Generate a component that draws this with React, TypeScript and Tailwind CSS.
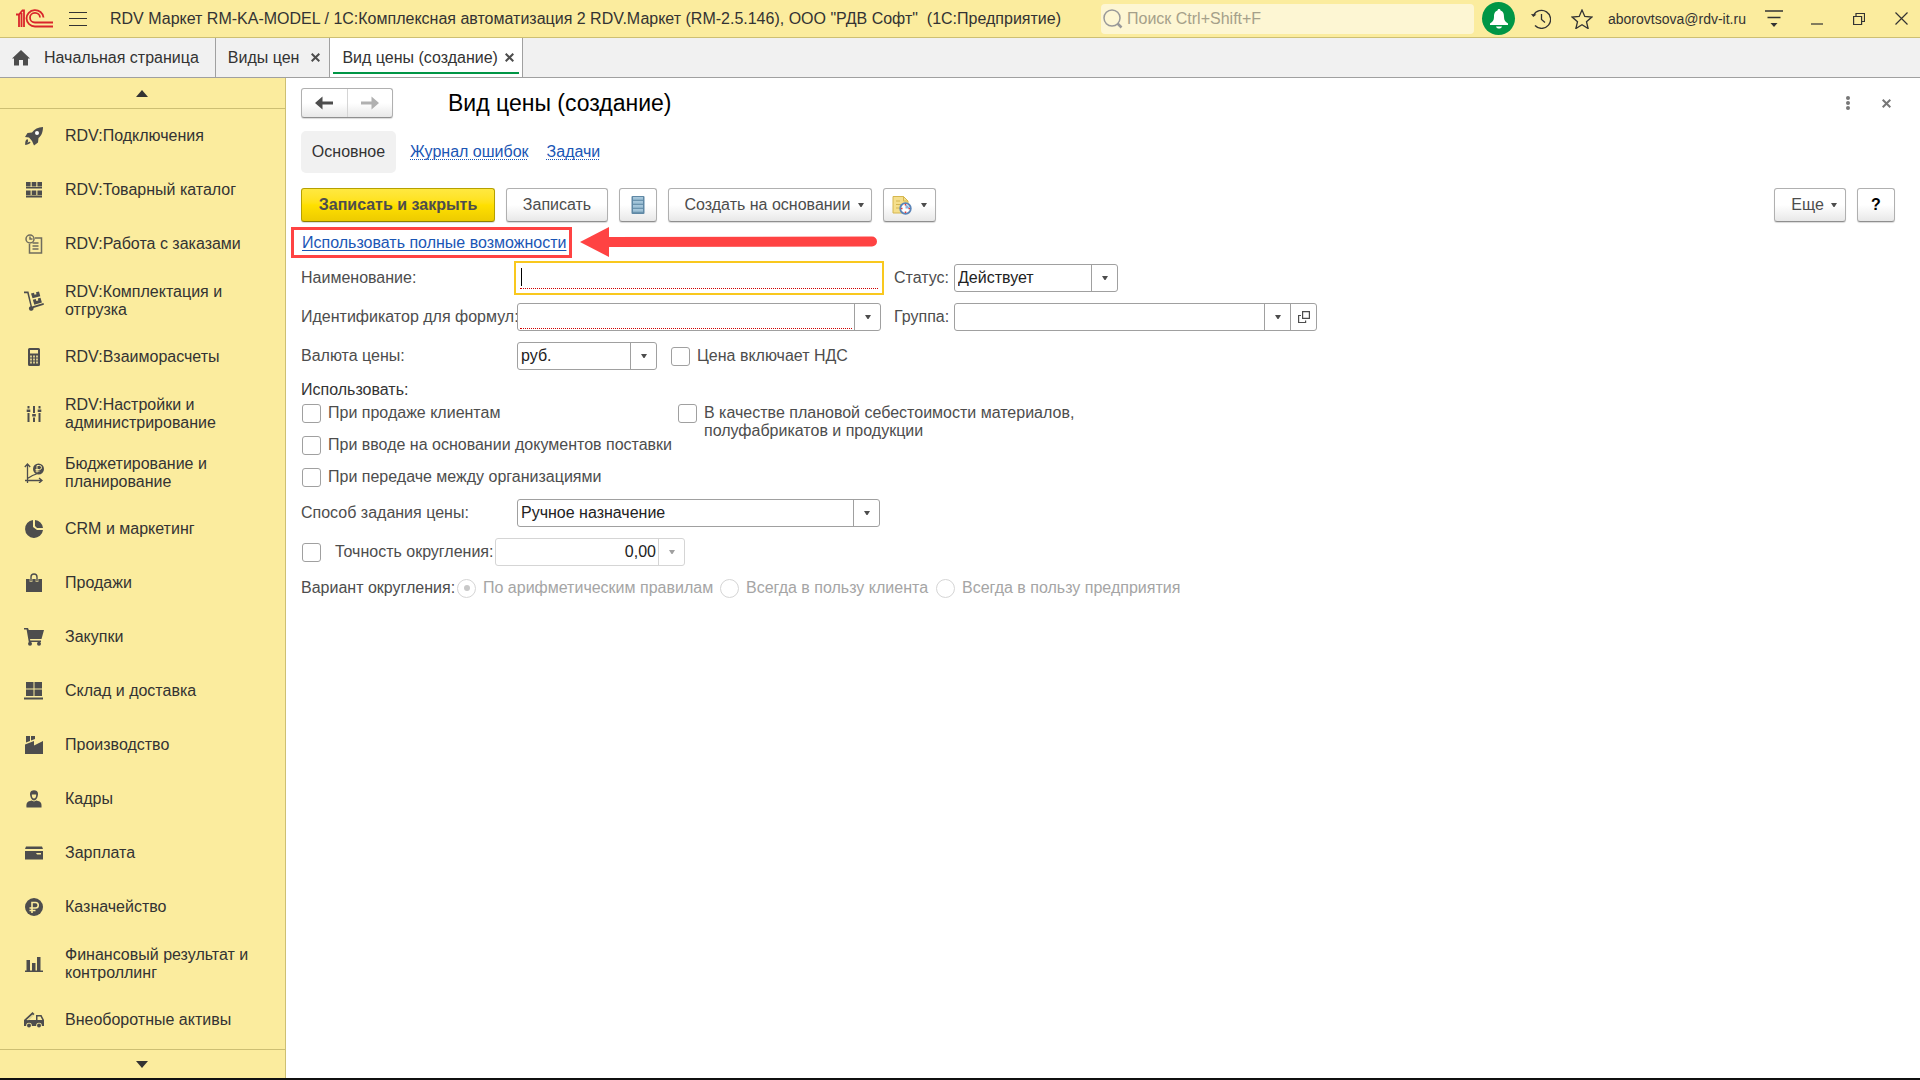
import React, { useState } from 'react';
import clsx from 'clsx';

interface Section {
  label: string;
  icon: React.ReactNode;
  twoLines?: boolean;
}

const sections: Section[] = [
  {
    label: 'RDV:Подключения',
    icon: (
      <>
        <path d="M19 1c-5 .3-8.500 2-11 5.500L3.500 7 1 11l4 .5L8 15l2 4.500 4-3L14.500 12C18 9.500 19 5 19 1z" />
        <circle cx="13" cy="7" r="2" className="fill-white" />
        <path d="M3.500 13c-2 .6-2.500 3-2.300 6 1.500-.2 4.500-.5 5.500-3l-1.500-.3-1.800 1.300.8-2z" />
      </>
    ),
  },
  {
    label: 'RDV:Товарный каталог',
    icon: (
      <path d="M2 2h4.600v4.500H2zM7.700 2h4.600v4.500H7.700zM13.400 2H18v4.500h-4.600zM2 7h16v1.500H2zM2 10.500h4.600v4.500H2zM7.700 10.500h4.600v4.500H7.700zM13.400 10.500H18v4.500h-4.600zM2 15.500h16v2H2z" />
    ),
  },
  {
    label: 'RDV:Работа с заказами',
    icon: (
      <g fill="none" stroke="currentColor" strokeWidth="1.500" opacity=".8">
        <circle cx="6" cy="5" r="4" />
        <path d="M6 2.500V5h2.500M11 4h6.500v15h-12V10M8.500 9h6M8.500 12h6M8.500 15h6" />
      </g>
    ),
  },
  {
    label: 'RDV:Комплектация и отгрузка',
    twoLines: true,
    icon: (
      <>
        <path d="M0 .5h4.500L8 15.500l11.500-3.500.4 1.700L9.500 17a2.300 2.300 0 1 1-3-1.700L3.300 2.300H0z" />
        <path d="M7 2.500l3-.8.5 2 2-.5-.5-2 3-.7 1.300 4.700L8.500 7.300zM8.800 8.800l3-.8.5 2 2-.5-.5-2 2.700-.7 1.400 4.700-7.600 2.300z" />
      </>
    ),
  },
  {
    label: 'RDV:Взаиморасчеты',
    icon: (
      <>
        <path d="M5.500 1h9A1.500 1.500 0 0 1 16 2.500v15a1.500 1.500 0 0 1-1.500 1.500h-9A1.500 1.500 0 0 1 4 17.500v-15A1.500 1.500 0 0 1 5.500 1z" />
        <path className="fill-[#fbec9e]" d="M6 3h8v3.500H6z" />
        <path
          className="fill-[#d3c78c]"
          d="M6 8.500h2v2H6zM9 8.500h2v2H9zM12 8.500h2v2h-2zM6 11.500h2v2H6zM9 11.500h2v2H9zM12 11.500h2v2h-2zM6 14.500h2v2H6zM9 14.500h2v2H9zM12 14.500h2v2h-2z"
        />
      </>
    ),
  },
  {
    label: 'RDV:Настройки и администрирование',
    twoLines: true,
    icon: (
      <path d="M3.500 2h2v2.500h-2zM2.700 5.500h3.600v2.500H2.700zM3.500 9h2v9h-2zM9 2h2v7H9zM8.200 10h3.600v2.500H8.200zM9 13.500h2V18H9zM14.500 2h2v2.500h-2zM13.700 5.500h3.600v2.500h-3.600zM14.500 9h2v9h-2z" />
    ),
  },
  {
    label: 'Бюджетирование и планирование',
    twoLines: true,
    icon: (
      <>
        <path
          fill="none"
          stroke="currentColor"
          strokeWidth="1.300"
          d="M3.500 20V2M.8 4l2.700-3 2.700 3M1 17.500h17M15 15l3 2.500-3 2.500M3.500 15.500l5-3 4-1.500"
        />
        <circle cx="14.500" cy="6" r="5.500" />
        <path fill="none" stroke="#fbec9e" d="M13 9.500v-7h2.500a1.800 1.800 0 0 1 0 4h-4M11.500 8h4" />
      </>
    ),
  },
  {
    label: 'CRM и маркетинг',
    icon: <path d="M9 1a9 9 0 1 0 10 10h-6l-4-3zM11 1v6l2 2h6a9 9 0 0 0-8-8z" />,
  },
  {
    label: 'Продажи',
    icon: (
      <>
        <path d="M2 6h16v13H2z" />
        <path fill="none" stroke="#fbec9e" strokeWidth="2.600" d="M7 9V6M13 9V6" />
        <path fill="none" stroke="currentColor" strokeWidth="1.400" d="M7 8.500V4a3 3 0 0 1 6 0v4.500" />
      </>
    ),
  },
  {
    label: 'Закупки',
    icon: (
      <>
        <path d="M0 1h4l.8 2H20l-2.500 9H6l.3 1.500H17V15H4.800L2.600 2.500H0z" />
        <circle cx="6" cy="16.800" r="2" />
        <circle cx="15" cy="16.800" r="2" />
      </>
    ),
  },
  {
    label: 'Склад и доставка',
    icon: <path d="M2 1h7.500v6.500H2zM10.500 1H18v6.500h-7.500zM2 8.500h7.500V15H2zM10.500 8.500H18V15h-7.500zM0 16.500h19v2H0z" />,
  },
  {
    label: 'Производство',
    icon: <path d="M1 9.500l9-3.500v4.500L19 6v13H1zM2 1h4v5L2 7.500zM7 1h4v3L7 5.500z" />,
  },
  {
    label: 'Кадры',
    icon: (
      <>
        <path d="M6 4.500c0-4.500 8-4.500 8 0 0 4-2 7-4 7s-4-3-4-7z" />
        <path className="fill-[#fbec9e]" d="M7.800 5.500h4.400c0 2.500-.8 4-2.200 4s-2.200-1.500-2.200-4z" />
        <path d="M2.500 18.500c-.5-5 1-6 5-7l2.500 1 2.500-1c4 1 5.500 2 5 7z" />
      </>
    ),
  },
  {
    label: 'Зарплата',
    icon: (
      <>
        <path d="M2 3.500h16l1 2.500H1zM1 8h18v8.500H1z" />
        <path className="fill-[#fbec9e]" d="M12 10h5v1.500h-4z" />
      </>
    ),
  },
  {
    label: 'Казначейство',
    icon: (
      <>
        <circle cx="10" cy="10" r="9" />
        <path
          fill="none"
          stroke="#fbec9e"
          strokeWidth="1.600"
          d="M8 16V5.500h3.500a2.700 2.700 0 0 1 0 5.500H5.500M5.500 13.500h6"
        />
      </>
    ),
  },
  {
    label: 'Финансовый результат и контроллинг',
    twoLines: true,
    icon: <path d="M2.500 6H6v10.500h2V9h3.500v7.500H13V3h3.500v13.500H19V18H1v-1.500h1.500z" />,
  },
  {
    label: 'Внеоборотные активы',
    icon: (
      <>
        <path d="M0 10l8.500-8 2 2-6 6H12V5h5.500L20 10v6H0z" />
        <path className="fill-[#fbec9e]" d="M13.500 6.500h3l1.800 3.500h-4.800zM2.500 10l6-5.500.7.700-5 5z" />
        <circle cx="5" cy="15.500" r="2.800" className="fill-[#fbec9e]" />
        <circle cx="15" cy="15.500" r="2.800" className="fill-[#fbec9e]" />
        <circle cx="5" cy="15.500" r="2" />
        <circle cx="15" cy="15.500" r="2" />
      </>
    ),
  },
];

function Triangle({ className }: { className?: string }) {
  return (
    <svg viewBox="0 0 6 4" className={clsx('h-1 w-1.5', className)} fill="currentColor" aria-hidden="true">
      <path d="M0 0h6L3.500 4h-1z" />
    </svg>
  );
}

function CloseIcon() {
  return (
    <svg viewBox="0 0 9 9" className="size-[9px]" fill="none" stroke="currentColor" strokeWidth="2" aria-hidden="true">
      <path d="M.7.7l7.600 7.600M8.300.7L.7 8.300" />
    </svg>
  );
}

function TitleBar() {
  return (
    <header className="flex h-[38px] shrink-0 items-center border-b border-[#cdbf73] bg-[#fbec9e] pl-4 pr-3 text-[#333]">
      <svg viewBox="0 0 37 19" className="h-[19px] w-[37px] text-[#d9252b]" fill="none" stroke="currentColor" strokeWidth="1.800" aria-label="1С">
        <path d="M0 5.500h3V18M3 5.500L6.500 1.500H8V18M5.500 4v14" />
        <path d="M27.500 8.500A8.500 8.200 0 1 0 19 17.500h18" />
        <path d="M24 8.500A5 4.800 0 1 0 19 13.500h18" />
      </svg>
      <button className="ml-4 flex h-[14px] w-[18px] flex-col justify-between" aria-label="Меню">
        <span className="h-px w-full bg-[#333]" />
        <span className="h-px w-full bg-[#333]" />
        <span className="h-px w-full bg-[#333]" />
      </button>
      <h1 className="ml-[23px] whitespace-pre text-base">
        RDV Маркет RM-KA-MODEL / 1С:Комплексная автоматизация 2 RDV.Маркет (RM-2.5.146), ООО "РДВ Софт"  (1С:Предприятие)
      </h1>

      <div className="ml-auto flex items-center">
        <label className="flex h-[30px] w-[373px] items-center rounded-sm bg-[#fdf6d3] pl-0.5 text-[#999]">
          <svg viewBox="0 0 20 20" className="size-5" fill="none" stroke="currentColor" aria-hidden="true">
            <circle cx="9" cy="9" r="8" strokeWidth="1.500" />
            <path d="M14.500 14.500l4 4" strokeWidth="2.500" />
          </svg>
          <input
            type="search"
            placeholder="Поиск Ctrl+Shift+F"
            className="ml-1 min-w-0 flex-1 bg-transparent text-base outline-none placeholder:text-[#a5a08a]"
          />
        </label>
        <button className="ml-2 flex size-[33px] items-center justify-center rounded-full bg-[#009646] text-white" aria-label="Уведомления">
          <svg viewBox="0 0 18 20" className="h-5 w-[18px]" fill="currentColor">
            <path d="M9 0c1 0 1.500.7 1.500 1.500C13.500 2.500 14 5 14 8c0 3.500 1.500 5 4 6.500v1.500H0v-1.500C2.500 13 4 11.500 4 8c0-3 .5-5.500 3.500-6.500C7.500.7 8 0 9 0zM6 17.500h6c-.5 1.500-1.500 2-3 2s-2.500-.5-3-2z" />
          </svg>
        </button>
        <button className="ml-4" aria-label="История">
          <svg viewBox="0 0 20 20" className="size-5" fill="none" stroke="currentColor" strokeWidth="1.300">
            <path d="M2.500 6.500A9 9 0 1 1 4 16.500" />
            <path d="M10.500 5v5.500l3.500 3" />
            <path d="M0 5l2.300 3L5.500 5.500z" fill="currentColor" stroke="none" />
          </svg>
        </button>
        <button className="ml-5" aria-label="Избранное">
          <svg viewBox="0 0 22 20" className="h-5 w-[22px]" fill="none" stroke="currentColor" strokeWidth="1.300">
            <path d="M11 1l2.800 6.500 7 .6-5.300 4.600 1.600 6.800L11 15.800l-6.100 3.700 1.600-6.800L1.200 8.100l7-.6z" />
          </svg>
        </button>
        <a href="#user" className="ml-[15px] w-[141px] text-sm">
          aborovtsova@rdv-it.ru
        </a>
        <button className="ml-4" aria-label="Настройка панели">
          <svg viewBox="0 0 18 17" className="h-[17px] w-[18px]" fill="none" stroke="currentColor" strokeWidth="1.500">
            <path d="M0 1h18M2.500 7.500h13" />
            <path d="M5.500 13h7L9 17z" fill="currentColor" stroke="none" />
          </svg>
        </button>
        <button className="ml-7" aria-label="Свернуть">
          <svg viewBox="0 0 12 12" className="size-3" stroke="currentColor" strokeWidth="1.200">
            <path d="M0 11h12" />
          </svg>
        </button>
        <button className="ml-[30px]" aria-label="Восстановить">
          <svg viewBox="0 0 12 12" className="size-3" fill="none" stroke="currentColor" strokeWidth="1.200">
            <path d="M.6 3.500h8v8h-8zM3 3.500v-3h8.500v8H9" />
          </svg>
        </button>
        <button className="ml-[30px]" aria-label="Закрыть">
          <svg viewBox="0 0 13 13" className="size-[13px]" stroke="currentColor" strokeWidth="1.200">
            <path d="M.5.5l12 12M12.500.5l-12 12" />
          </svg>
        </button>
      </div>
    </header>
  );
}

function TabBar() {
  return (
    <nav className="flex h-10 shrink-0 border-b border-[#a0a0a0] bg-[#f1f1f1] text-[#333]">
      <button className="flex items-center border-r border-[#a0a0a0] pl-3 pr-4">
        <svg viewBox="0 0 18 16" className="h-4 w-[18px] text-[#4d4d4d]" fill="currentColor" aria-hidden="true">
          <path d="M9 0l9 8.500h-2V15.500h-5V10H7v5.500H2V8.500H0z" />
        </svg>
        <span className="ml-3.5">Начальная страница</span>
      </button>
      <div className="flex items-center border-r border-[#a0a0a0] pl-3 pr-[9px]">
        <a href="#price-types">Виды цен</a>
        <button className="ml-3 text-[#4d4d4d]" aria-label="Закрыть вкладку Виды цен">
          <CloseIcon />
        </button>
      </div>
      <div className="border-r border-[#a0a0a0] bg-white px-[3px] pb-[3px]">
        <div className="flex h-full items-center border-b-2 border-[#009646] pl-[9px] pr-[5px] pt-[5px]">
          <a href="#price-type-new">Вид цены (создание)</a>
          <button className="ml-[7px] text-[#4d4d4d]" aria-label="Закрыть вкладку Вид цены">
            <CloseIcon />
          </button>
        </div>
      </div>
    </nav>
  );
}

function Sidebar() {
  return (
    <aside className="flex w-[286px] shrink-0 flex-col border-r border-[#cdbf73] bg-[#fbec9e] text-[#333]">
      <button className="flex h-[31px] items-center justify-center border-b border-[#cdbf73] pr-0.5" aria-label="Прокрутить вверх">
        <svg viewBox="0 0 12 7" className="h-[7px] w-3" fill="currentColor">
          <path d="M6 0l6 7H0z" />
        </svg>
      </button>
      <ul className="flex-1">
        {sections.map((s) => (
          <li key={s.label}>
            <a
              href="#section"
              className={clsx('flex items-center pl-6 pr-8 leading-[18px]', s.twoLines ? 'h-[59px]' : 'h-[54px]')}
            >
              <svg viewBox="0 0 20 20" className="size-5 shrink-0 text-[#4d4d4d]" fill="currentColor" aria-hidden="true">
                {s.icon}
              </svg>
              <span className="ml-[21px]">{s.label}</span>
            </a>
          </li>
        ))}
      </ul>
      <button className="flex h-[29px] items-center justify-center border-t border-[#cdbf73] pr-0.5" aria-label="Прокрутить вниз">
        <svg viewBox="0 0 12 7" className="h-[7px] w-3" fill="currentColor">
          <path d="M0 0h12L6 7z" />
        </svg>
      </button>
    </aside>
  );
}

const buttonClass =
  'flex h-[34px] items-center justify-center rounded-[3px] border border-[#b0b0b0] border-b-[#8f8f8f] bg-linear-to-b from-white from-50% to-[#e8e8e8] text-[#4d4d4d] shadow-[0_1px_1px_rgba(0,0,0,0.15)]';

function Toolbar() {
  return (
    <div className="mt-[15px] flex items-center">
      <button className="flex h-[34px] w-[194px] items-center justify-center rounded-[3px] border border-[#b5a000] border-b-[#8f7f00] bg-linear-to-b from-[#ffe840] via-[#ffe000] to-[#edcb00] font-bold text-[#4d4d4d] shadow-[0_1px_1px_rgba(0,0,0,0.15)]">
        Записать и закрыть
      </button>
      <button className={clsx(buttonClass, 'ml-[11px] w-[102px]')}>Записать</button>
      <button className={clsx(buttonClass, 'ml-[11px] w-[38px]')} aria-label="Список">
        <svg viewBox="0 0 14 20" className="h-5 w-3.5">
          <rect x=".5" y="1" width="13" height="18" rx="1" fill="#5f88a5" />
          <path d="M2 3h10M2 7h10M2 11h10M2 15h10" stroke="#c0dced" strokeWidth="1.500" />
          <path d="M2 4.500h10M2 8.500h10M2 12.500h10M2 16.500h10" stroke="#8db3ca" strokeWidth="1.500" />
        </svg>
      </button>
      <button className={clsx(buttonClass, 'ml-[11px] w-[204px] pl-2')}>
        Создать на основании
        <Triangle className="ml-[7px]" />
      </button>
      <button className={clsx(buttonClass, 'ml-[11px] w-[53px]')} aria-label="Напоминания">
        <svg viewBox="0 0 20 20" className="size-5" fill="none">
          <path d="M1 1.500h10.500L16 6v12H1z" fill="#f5df8d" stroke="#d5b64e" />
          <path d="M11.500 1.500V6H16M4 6h4M4 9.500h8M4 13h4" stroke="#d5b64e" />
          <circle cx="13.500" cy="13.500" r="5.300" fill="#fff" stroke="#5a84b8" strokeWidth="1.800" />
          <path d="M13.500 13.500V10a3.500 3.500 0 0 1 3.500 3.500z" fill="#86b3e0" />
          <path d="M13.500 9v1.500M13.500 16.500V18M9 13.500h1.500M16.500 13.500H18" stroke="#e03a3a" strokeWidth="1.500" />
        </svg>
        <Triangle className="ml-[9px]" />
      </button>
      <button className={clsx(buttonClass, 'ml-auto w-[72px] pl-2')}>
        Еще
        <Triangle className="ml-[7px]" />
      </button>
      <button className={clsx(buttonClass, 'ml-[11px] w-[38px] font-bold text-black')}>?</button>
    </div>
  );
}

const fieldClass = 'flex h-7 overflow-hidden rounded-[3px] border border-[#a0a0a0] bg-white text-[#222]';
const dropClass = 'flex w-[26px] shrink-0 items-center justify-center border-l border-[#a0a0a0] text-[#4d4d4d]';
const requiredClass = 'h-full w-full border-b border-dotted border-[#d00000] outline-none';
const labelClass = 'w-[216px] whitespace-nowrap';

interface SelectFieldProps {
  id: string;
  value: string;
  className: string;
}

function SelectField({ id, value, className }: SelectFieldProps) {
  return (
    <div className={clsx(fieldClass, className)}>
      <select id={id} defaultValue={value} className="min-w-0 flex-1 appearance-none pl-[3px] outline-none">
        <option>{value}</option>
      </select>
      <span className={dropClass}>
        <Triangle />
      </span>
    </div>
  );
}

interface CheckProps {
  label: string;
  className?: string;
}

const boxClass = 'size-[19px] shrink-0 appearance-none rounded-[3px] border border-[#a0a0a0] bg-white checked:bg-[#a0a0a0]';

function Check({ label, className }: CheckProps) {
  return (
    <label className={clsx('flex items-start gap-[7px] leading-[18px]', className)}>
      <input type="checkbox" className={boxClass} />
      <span>{label}</span>
    </label>
  );
}

function PriceForm() {
  const [name, setName] = useState('');

  return (
    <form className="text-[#4d4d4d]">
      <div className="mt-[5px] flex h-[31px] items-center">
        <div className="relative flex h-full items-center px-px">
          <a href="#full" className="text-[#1a56b5] underline underline-offset-2">
            Использовать полные возможности
          </a>
          {/* callout frame and arrow drawn over the form */}
          <span className="pointer-events-none absolute -left-2.5 inset-y-0 w-[281px] border-3 border-[#ff4343]" />
          <svg
            viewBox="0 0 297 30"
            className="pointer-events-none absolute left-[279px] top-0 h-[30px] w-[297px]"
            fill="#ff4343"
            aria-hidden="true"
          >
            <path d="M0 15L29 0v10l263-.5a4.500 4.500 0 0 1 0 10L29 20v10z" />
          </svg>
        </div>
      </div>

      <div className="mt-1.5 flex flex-col gap-[11px]">
        <div className="flex items-center">
          <label htmlFor="name" className={labelClass}>Наименование:</label>
          <div className="relative h-7 w-[364px] px-[3px] pb-[3px] outline-2 outline-offset-1 outline-[#f9c81e]">
            <input id="name" value={name} onChange={(e) => setName(e.target.value)} className={requiredClass} />
            {!name && <span className="pointer-events-none absolute left-1 top-1 h-[18px] w-px bg-black" />}
          </div>
          <label htmlFor="status" className="ml-[13px] w-[60px]">Статус:</label>
          <SelectField id="status" value="Действует" className="w-[164px]" />
        </div>

        <div className="flex items-center">
          <label htmlFor="formula-id" className={labelClass}>Идентификатор для формул:</label>
          <div className={clsx(fieldClass, 'w-[364px]')}>
            <div className="flex-1 px-0.5 pb-0.5">
              <input id="formula-id" className={requiredClass} />
            </div>
            <button type="button" className={dropClass} aria-label="Выбрать идентификатор">
              <Triangle />
            </button>
          </div>
          <label htmlFor="group" className="ml-[13px] w-[60px]">Группа:</label>
          <div className={clsx(fieldClass, 'w-[363px]')}>
            <input id="group" className="min-w-0 flex-1 px-[3px] outline-none" />
            <button type="button" className={dropClass} aria-label="Выбрать группу">
              <Triangle />
            </button>
            <button type="button" className={dropClass} aria-label="Открыть группу">
              <svg viewBox="0 0 12 12" className="size-3" fill="none" stroke="currentColor" strokeWidth="1.200">
                <path d="M4.600.6h6.800v6.800H4.600zM3 4.500H.6v7h7V9.500" />
              </svg>
            </button>
          </div>
        </div>

        <div className="flex items-center">
          <label htmlFor="currency" className={labelClass}>Валюта цены:</label>
          <SelectField id="currency" value="руб." className="w-[140px]" />
          <Check label="Цена включает НДС" className="ml-3.5" />
        </div>
      </div>

      <fieldset>
        <legend className="pt-2.5 leading-5 text-[#333]">Использовать:</legend>
        <div className="flex items-start pl-px pt-1">
          <div className="flex w-[376px] flex-col gap-[13px]">
            <Check label="При продаже клиентам" />
            <Check label="При вводе на основании документов поставки" />
            <Check label="При передаче между организациями" />
          </div>
          <Check label="В качестве плановой себестоимости материалов, полуфабрикатов и продукции" className="w-[400px]" />
        </div>
      </fieldset>

      <div className="mt-3 flex items-center">
        <label htmlFor="method" className={labelClass}>Способ задания цены:</label>
        <SelectField id="method" value="Ручное назначение" className="w-[363px]" />
      </div>

      <div className="mt-[11px] flex items-center pl-px">
        <input type="checkbox" id="use-precision" className={boxClass} />
        <label htmlFor="use-precision" className="ml-3.5 w-40 whitespace-nowrap">Точность округления:</label>
        <div className="flex h-7 w-[190px] rounded-[3px] border border-[#d5d5d5]">
          <input
            disabled
            defaultValue="0,00"
            aria-label="Точность округления"
            className="min-w-0 flex-1 pr-0.5 text-right text-[#222]"
          />
          <button
            type="button"
            disabled
            className="flex w-[26px] items-center justify-center border-l border-[#d5d5d5] text-[#a0a0a0]"
            aria-label="Выбрать точность"
          >
            <Triangle />
          </button>
        </div>
      </div>

      <div className="mt-3 flex h-5 items-center whitespace-nowrap" role="radiogroup" aria-labelledby="rounding">
        <span id="rounding" className="w-[156px]">Вариант округления:</span>
        <Rounding label="По арифметическим правилам" className="w-[263px]" checked />
        <Rounding label="Всегда в пользу клиента" className="w-[216px]" />
        <Rounding label="Всегда в пользу предприятия" />
      </div>
    </form>
  );
}

function Rounding({ label, className, checked }: CheckProps & { checked?: boolean }) {
  return (
    <label className={clsx('flex items-center gap-[7px] text-[#a5a5a5]', className)}>
      <input
        type="radio"
        name="rounding"
        disabled
        defaultChecked={checked}
        className="flex size-[19px] appearance-none items-center justify-center rounded-full border border-[#d5d5d5] checked:before:size-1.5 checked:before:rounded-full checked:before:bg-[#c8c8c8]"
      />
      {label}
    </label>
  );
}

const linkClass = 'text-[#1a56b5] underline decoration-dotted decoration-1 underline-offset-2 [text-decoration-skip-ink:none]';

export default function App() {
  return (
    <div className="flex min-h-screen flex-col border-b-2 border-[#101010] bg-white font-['Liberation_Sans',Arial,sans-serif] text-base">
      <TitleBar />
      <TabBar />
      <div className="flex flex-1">
        <Sidebar />
        <main className="min-w-0 flex-1 pl-[15px] pr-[25px] pt-2.5">
          <div className="flex h-[30px] items-center">
            <div className="flex h-[30px] w-[92px] rounded-[3px] border border-[#b0b0b0] border-b-[#8f8f8f] bg-linear-to-b from-white from-50% to-[#e8e8e8] shadow-[0_1px_1px_rgba(0,0,0,0.15)]">
              <button className="flex flex-1 items-center justify-center border-r border-[#d5d5d5] text-[#4d4d4d]" aria-label="Назад">
                <svg viewBox="0 0 18 14" className="h-3.5 w-[18px]" fill="currentColor">
                  <path d="M0 7l7.500-6.500v5H18v3H7.500v5z" />
                </svg>
              </button>
              <button className="flex flex-1 items-center justify-center text-[#b0b0b0]" aria-label="Вперед">
                <svg viewBox="0 0 18 14" className="h-3.5 w-[18px]" fill="currentColor">
                  <path d="M18 7L10.500.5v5H0v3h10.500v5z" />
                </svg>
              </button>
            </div>
            <h2 className="ml-[55px] text-[23px] text-black">Вид цены (создание)</h2>
            <button className="ml-auto text-[#777]" aria-label="Действия">
              <svg viewBox="0 0 4 14" className="h-3.5 w-1" fill="currentColor">
                <circle cx="2" cy="2" r="2" />
                <circle cx="2" cy="7" r="2" />
                <circle cx="2" cy="12" r="2" />
              </svg>
            </button>
            <button className="ml-8 mr-1 text-[#777]" aria-label="Закрыть форму">
              <CloseIcon />
            </button>
          </div>

          <nav className="mt-[13px] flex items-center">
            <a href="#main" className="flex h-[42px] w-[95px] items-center justify-center rounded-[5px] bg-[#f1f1f1] text-[#333]">
              Основное
            </a>
            <a href="#errors" className={clsx(linkClass, 'ml-3.5')}>
              Журнал ошибок
            </a>
            <a href="#tasks" className={clsx(linkClass, 'ml-[18px]')}>
              Задачи
            </a>
          </nav>

          <Toolbar />
          <PriceForm />
        </main>
      </div>
    </div>
  );
}
